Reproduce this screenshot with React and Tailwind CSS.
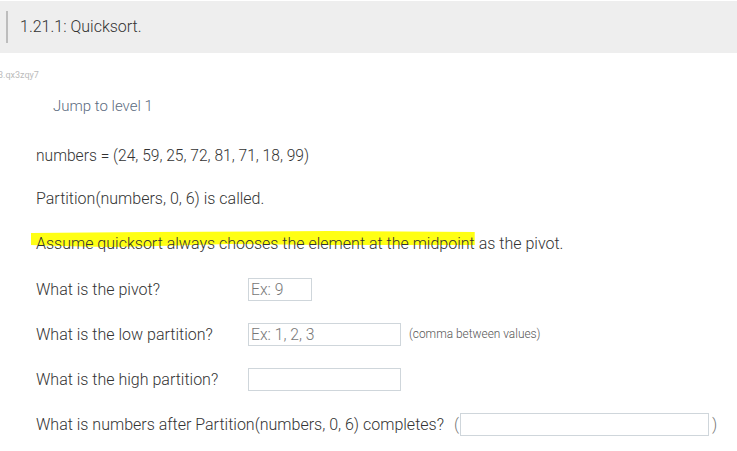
export default function App() {
  const row = "flex items-center h-[45px] text-[16px] text-[#333] font-light";
  return (
    <div className="w-[737px] h-[451px] bg-white font-['Roboto',sans-serif] overflow-hidden">
      {/* Header */}
      <div className="mt-px h-[52px] bg-[#eeeeee] flex items-center pl-[6px]">
        <div className="w-[2px] h-[32px] bg-[#bdbdbd]" />
        <span className="ml-[12px] text-[16px] text-[#333] font-light">1.21.1: Quicksort.</span>
      </div>

      <div className="h-[44px] flex items-center -ml-[2px] text-[9px] text-[#bbb] pt-[1px]">3.qx3zqy7</div>

      <div className="pl-[53px] h-[18px] flex items-center text-[15px] font-light text-[#5b6b80]">Jump to level 1</div>

      <div className="pl-[36px] pt-[21px]">
        <div className="flex items-center h-[41px] text-[15.6px] font-light text-[#333]">numbers = (24, 59, 25, 72, 81, 71, 18, 99)</div>
        <div className="flex items-center h-[44px] text-[16px] font-light text-[#333]">Partition(numbers, 0, 6) is called.</div>
        <div className="flex items-center h-[46px] text-[16px] font-light text-[#333]">
          <span className="relative">
            <svg className="absolute -left-[7px] -top-[2px] w-[calc(100%+9px)] h-[20px]" viewBox="0 0 448 20" preserveAspectRatio="none">
              <path d="M2 3 L120 2 L300 1 L446 2 L446 15 L300 15 L200 14 L130 16 L80 17 L30 16 L2 15 Z" fill="#ffff14" />
            </svg>
            <span className="relative">Assume quicksort always chooses the element at the midpoint</span>
          </span>
          <span className="ml-[4px]">as the pivot.</span>
        </div>
        <div className={row}>
          <span className="w-[212px]">What is the pivot?</span>
          <div className="w-[64px] h-[23px] border border-[#cfd6db] text-[#777] text-[15.7px] leading-[21px] pl-[2px]">Ex: 9</div>
        </div>
        <div className={row}>
          <span className="w-[212px]">What is the low partition?</span>
          <div className="w-[153px] h-[23px] border border-[#cfd6db] text-[#777] text-[15.7px] leading-[21px] pl-[2px]">Ex: 1, 2, 3</div>
          <span className="ml-[8px] text-[11.9px] text-[#555]">(comma between values)</span>
        </div>
        <div className={row}>
          <span className="w-[212px]">What is the high partition?</span>
          <div className="w-[153px] h-[23px] border border-[#cfd6db]" />
        </div>
        <div className={row}>
          <span>What is numbers after Partition(numbers, 0, 6) completes?</span>
          <span className="ml-[10px] text-[#777]">(</span>
          <div className="ml-[1px] w-[249px] h-[23px] border border-[#cfd6db]" />
          <span className="ml-[3px] text-[#777]">)</span>
        </div>
      </div>
    </div>
  );
}
